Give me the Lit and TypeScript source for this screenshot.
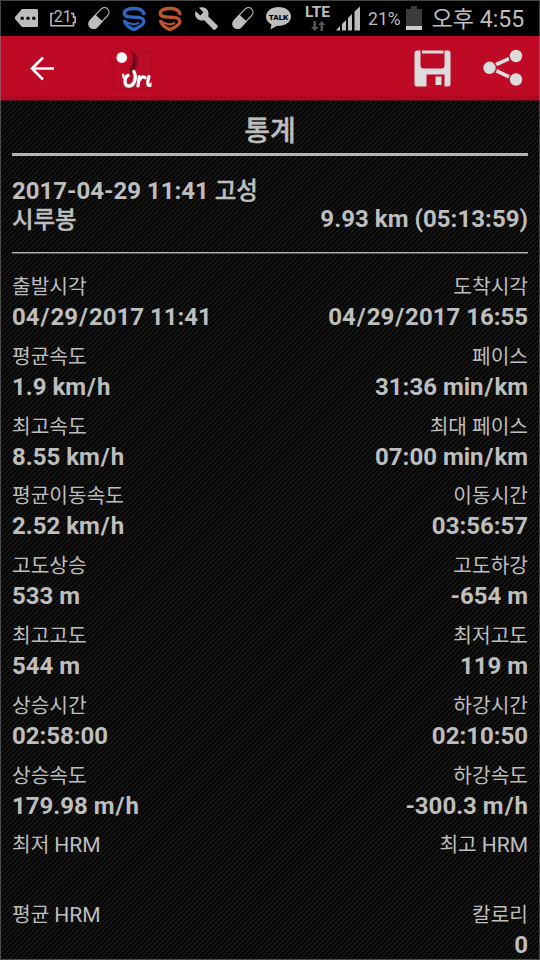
import { LitElement, html, css, svg } from "lit";
import { customElement } from "lit/decorators.js";

type Cell = [label: string, value: string];

const ROWS: [Cell, Cell][] = [
  [["출발시각", "04/29/2017 11:41"], ["도착시각", "04/29/2017 16:55"]],
  [["평균속도", "1.9 km/h"], ["페이스", "31:36 min/km"]],
  [["최고속도", "8.55 km/h"], ["최대 페이스", "07:00 min/km"]],
  [["평균이동속도", "2.52 km/h"], ["이동시간", "03:56:57"]],
  [["고도상승", "533 m"], ["고도하강", "-654 m"]],
  [["최고고도", "544 m"], ["최저고도", "119 m"]],
  [["상승시간", "02:58:00"], ["하강시간", "02:10:50"]],
  [["상승속도", "179.98 m/h"], ["하강속도", "-300.3 m/h"]],
  [["최저 HRM", ""], ["최고 HRM", ""]],
  [["평균 HRM", ""], ["칼로리", "0"]],
];

const pill = svg`<g transform="rotate(-47 12 12)">
  <rect x="-.5" y="7.400" width="25" height="9.200" rx="4.600" fill="none" stroke="#bdbdbd" stroke-width="1.200"/>
  <path d="M12 6.800H4a5.200 5.200 0 0 0 0 10.400H12z" fill="#bdbdbd"/></g>`;

const shield = (color: string) => svg`<g fill="none" stroke="${color}" stroke-linejoin="round">
  <path stroke-width="3.300" d="M22.200 9C21.500 4 18 2.500 12.300 2.500 6 2.500 2.300 4 2.300 7.300c0 3.200 3 3.700 8.500 3.900 7 .2 11 .6 11 4.300 0 4-5.500 5.700-9.800 8.100-4.500-2.200-8.800-4.200-9.700-9.600"/>
  <path stroke-width="2" d="M1.500 15.200c3 1.500 6 2.400 10.500 3.300l5-1.500"/></g>`;

@customElement("status-bar")
export class StatusBar extends LitElement {
  static styles = css`
    :host {
      display: grid;
      grid-template-columns: 14px 25px 11px 28px 9px 24px 11px 24px 12px 24px 12px 24px 13px 24px 11px 26px 13px 27px 4px 26px 6px 38px auto;
      height: 36px;
      background: #000;
      color: #bdbdbd;
      font-family: Roboto, "Noto Sans CJK KR", sans-serif;
      white-space: nowrap;
    }
    svg { display: block; margin-top: 6px; overflow: visible; }
    .i1 { grid-column: 2; } .i2 { grid-column: 4; } .i3 { grid-column: 6; }
    .i4 { grid-column: 8; } .i5 { grid-column: 10; } .i6 { grid-column: 12; }
    .i7 { grid-column: 14; } .i8 { grid-column: 16; } .i9 { grid-column: 18; margin-top: 3px; }
    .i10 { grid-column: 20; } .i11 { grid-column: 22; }
    .tail { grid-column: 23; display: flex; gap: 9.500px; }
    .pct { font-size: 17.600px; line-height: 38px; }
    .time { font-size: 23.100px; line-height: 39px; }
  `;

  render() {
    return html`
      <svg class="i1" width="25" height="24"><path fill="#bdbdbd" d="M8 3h14.500a1.500 1.500 0 0 1 1.500 1.500v15a1.500 1.500 0 0 1-1.500 1.500H8l-7-8v-2z"/><g fill="#000"><circle cx="8.200" cy="12.300" r="1.700"/><circle cx="14" cy="12.300" r="1.700"/><circle cx="19.800" cy="12.300" r="1.700"/></g></svg>
      <svg class="i2" width="28" height="24"><path fill="none" stroke="#bdbdbd" stroke-width="1.600" d="M3.500 7.500H1V19.700H23.500V16.500h1.600V11H23.500V7.500h-2.500"/><text x="3.800" y="16.300" font-size="15.800" fill="#bdbdbd">21</text></svg>
      <svg class="i3" width="24" height="24">${pill}</svg>
      <svg class="i4" width="24" height="26">${shield("#2f66c4")}</svg>
      <svg class="i5" width="24" height="26">${shield("#c05430")}</svg>
      <svg class="i6" width="25" height="25" viewBox="0 0 24 24"><path fill="#bdbdbd" d="M22.700 19l-9.100-9.100c.9-2.300.4-5-1.500-6.900-2-2-5-2.400-7.400-1.300L9 6 6 9 1.600 4.700C.4 7.100.9 10.100 2.900 12.100c1.900 1.900 4.600 2.400 6.900 1.500l9.100 9.100c.4.4 1 .4 1.400 0l2.300-2.300c.5-.4.5-1.100.1-1.400z"/></svg>
      <svg class="i7" width="24" height="24">${pill}</svg>
      <svg class="i8" width="26" height="26"><path fill="#bdbdbd" d="M12.500 1C5.500 1 0 5.200 0 10.500c0 3.500 2.200 6.300 5.500 8L4.500 23.500l6-3.600c8 .6 14.500-3.600 14.500-9.400C25 5.200 19.500 1 12.500 1z"/><text x="12.500" y="13.600" text-anchor="middle" font-size="8" font-weight="900" fill="#000">TALK</text></svg>
      <svg class="i9" width="27" height="30"><text x="0" y="13.800" font-size="15.500" font-weight="700" textLength="25" fill="#bdbdbd">LTE</text><path fill="#555" d="M8.500 18h2.500v6h2.500L9.700 28 6 24h2.500zM15.500 28h2.500v-6h2.500l-3.700-4-3.800 4h2.500z"/></svg>
      <svg class="i10" width="26" height="26"><path fill="#bdbdbd" d="M0 24.500L4 20v4.500zM6 18l4-4v10.500H6zM12 12l4-4v16.500h-4zM18.500 5.500L24 .5v24h-5.500z"/></svg>
      <span class="i11 pct">21%</span>
      <div class="tail">
        <svg width="16" height="24"><path fill="#3c3c3c" d="M5 0h6v3h5v21H0V3h5z"/><path fill="#ccc" d="M0 20h16v4H0z"/></svg>
        <span class="time">오후 4:55</span>
      </div>
    `;
  }
}

@customElement("action-bar")
export class ActionBar extends LitElement {
  static styles = css`
    :host {
      display: flex;
      align-items: center;
      height: 65px;
      padding: 0 17px 0 29px;
      box-sizing: border-box;
      background: #bf0a26;
      border-bottom: 1px solid #5d0815;
      box-shadow: inset 0 -4px 0 #b00b22;
    }
    .logo { margin-left: 53px; }
    .save { margin-left: auto; }
    .share { margin-left: 32px; }
  `;

  render() {
    return html`
      <svg width="26" height="26"><path d="M25 13.500H3M14 2.500l-11 11 11 11" fill="none" stroke="#fff" stroke-width="2.600"/></svg>
      <svg class="logo" width="46" height="46">
        <defs>
          <linearGradient id="shade"><stop offset="0" stop-color="#4b0715"/><stop offset=".6" stop-color="#6d0818"/><stop offset="1" stop-color="#a80b22"/></linearGradient>
          <clipPath id="tile"><path d="M0 0h43.500v45H0z"/></clipPath>
        </defs>
        <path d="M5.500 7h38v37h-38z" fill="#ba0d27" stroke="#a30b21" stroke-width=".8"/>
        <path d="M21 7c8 0 12 6 9 12-2 4-5 6-6 11l-5-9z" fill="url(#shade)"/>
        <path d="M14 2c6 0 11 4.500 11 11S22 22 21 29L6 43V20C0 9 5 2 14 2z" fill="#bf0a26"/>
        <path d="M5.500 19C0 9 5 2.500 14 2.500c6 0 10 4 10.500 9" fill="none" stroke="#9b0d22"/>
        <circle cx="13.800" cy="12.600" r="5.300" fill="#fff"/>
        <g fill="none" stroke="#fff" stroke-linecap="round" stroke-linejoin="round" clip-path="url(#tile)">
          <path d="M15 29.500l.6 3" stroke-width="2.200"/>
          <path d="M20 30.500c-3.500 1-4.500 10.300.6 10.500 6 .2 8.400-9 5.200-14.500" stroke-width="3.400"/>
          <path d="M31.300 31.500l-1.300 9.500M32 34.500c1.500-2.800 3.500-3.200 5-1.800M41 31.500c-1.500 5-2 9 .3 9 1.700 0 2.700-1 3.700-3" stroke-width="3.200"/>
        </g>
      </svg>
      <svg class="save" width="37" height="37">
        <path fill="#dcdcdc" fill-rule="evenodd" d="M3 .5h31a2.500 2.500 0 0 1 2.500 2.500v31a2.500 2.500 0 0 1-2.500 2.500h-3.500V24.500H12.500v12H3A2.500 2.500 0 0 1 .5 34V3A2.500 2.500 0 0 1 3 .5zM6.500 .5v15a3 3 0 0 0 3 3h18a3 3 0 0 0 3-3V.5z"/>
        <path fill="#dcdcdc" d="M8 .5h21.500v3H8zM21.500 26.500h6V35h-6z"/>
      </svg>
      <svg class="share" width="40" height="38"><path d="M6.500 18.500L33 6.500M6.500 18.500L33 31" stroke="#dcdcdc" stroke-width="3.600"/><g fill="#dcdcdc" stroke="#bf0a26" stroke-width="1.400"><circle cx="6.500" cy="18.800" r="6.900"/><circle cx="33" cy="7" r="6.900"/><circle cx="33" cy="30.500" r="6.900"/></g></svg>
    `;
  }
}

@customElement("app-root")
export class AppRoot extends LitElement {
  static styles = css`
    :host {
      display: block;
      position: relative;
      width: 540px;
      height: 960px;
      overflow: hidden;
      color: #bebebe;
      font-family: Roboto, "Noto Sans CJK KR", sans-serif;
      background: repeating-linear-gradient(135deg, #050505 0 1.500px, #1c1b1a 2.300px 2.700px, #050505 3.536px);
    }
    .frame {
      position: absolute;
      inset: 0;
      border: 1px solid rgba(140, 140, 140, 0.5);
      pointer-events: none;
    }
    main { padding: 0 12px; }
    h1 {
      margin: 0;
      height: 52px;
      line-height: 62px;
      font-size: 28px;
      font-weight: 500;
      text-align: center;
      border-bottom: 3px solid #b4b2b2;
      -webkit-text-stroke: 0.4px;
    }
    .summary {
      display: flex;
      justify-content: space-between;
      align-items: flex-end;
      height: 97px;
      padding-bottom: 18px;
      box-sizing: border-box;
      border-bottom: 1px solid #b0b0ac;
      box-shadow: 0 1px 0 #5a5a58;
      font-size: 24px;
      line-height: 28px;
      font-weight: 700;
    }
    .name { width: 260px; line-height: 28.500px; }
    .total { line-height: 30px; letter-spacing: 0.050px; }
    .ko { font-weight: 500; font-size: 23.400px; -webkit-text-stroke: 0.4px; }
    .rows { padding-top: 19px; }
    .row {
      display: flex;
      justify-content: space-between;
      height: 69.800px;
      white-space: nowrap;
    }
    .cell:last-child { text-align: right; }
    .label { font-size: 20.300px; line-height: 30px; height: 30px; }
    .latin { font-size: 21px; }
    .value { margin-top: -1px; font-size: 24px; line-height: 32px; font-weight: 700; }
    .slash { padding: 0 1px; }
  `;

  private label(text: string) {
    const [ko, latin] = text.split(/(?=HRM)/);
    return latin ? html`${ko}<span class="latin">${latin}</span>` : ko;
  }

  private value(text: string) {
    return text.split("/").map((part, i) => (i ? html`<span class="slash">/</span>${part}` : part));
  }

  private cell([label, value]: Cell) {
    return html`<div class="cell"><div class="label">${this.label(label)}</div><div class="value">${this.value(value)}</div></div>`;
  }

  render() {
    return html`
      <status-bar></status-bar>
      <action-bar></action-bar>
      <main>
        <h1>통계</h1>
        <section class="summary">
          <div class="name">2017-04-29 11:41 <span class="ko">고성<br>시루봉</span></div>
          <div class="total">9.93 km (05:13:59)</div>
        </section>
        <section class="rows">
          ${ROWS.map(([a, b]) => html`<div class="row">${this.cell(a)}${this.cell(b)}</div>`)}
        </section>
      </main>
      <div class="frame"></div>
    `;
  }
}
